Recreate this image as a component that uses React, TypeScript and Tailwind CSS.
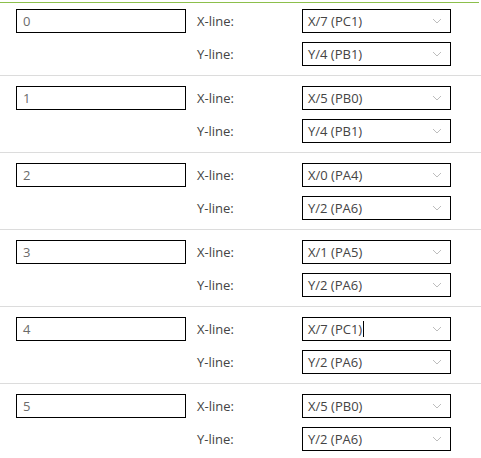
const rows = [
  { id: "0", x: "X/7 (PC1)", y: "Y/4 (PB1)" },
  { id: "1", x: "X/5 (PB0)", y: "Y/4 (PB1)" },
  { id: "2", x: "X/0 (PA4)", y: "Y/2 (PA6)" },
  { id: "3", x: "X/1 (PA5)", y: "Y/2 (PA6)" },
  { id: "4", x: "X/7 (PC1)", y: "Y/2 (PA6)", caret: true },
  { id: "5", x: "X/5 (PB0)", y: "Y/2 (PA6)" },
];

function Chevron() {
  return (
    <svg width="10" height="6" viewBox="0 0 10 6" className="shrink-0">
      <path d="M1 1 L5 5 L9 1" fill="none" stroke="#bdbdbd" strokeWidth="1" />
    </svg>
  );
}

function Select({ value, caret }: { value: string; caret?: boolean }) {
  return (
    <div className="flex h-6 w-[149px] items-center justify-between border border-black bg-white pl-[5px] pr-[8px]">
      <span className="flex items-center text-[#444]">
        {value}
        {caret && <span className="ml-px inline-block h-[16px] w-px bg-black" />}
      </span>
      <Chevron />
    </div>
  );
}

export default function App() {
  return (
    <div
      className="w-[481px] bg-white pt-[2px] text-[13px] leading-none"
      style={{ fontFamily: '"Open Sans", "Liberation Sans", sans-serif' }}
    >
      {rows.map((row, i) => (
        <div
          key={row.id}
          className={
            i === 0
              ? "w-[479px] border-t border-[#8cbf4b] pb-[9px] pt-[6px]"
              : "border-t border-[#dcdcdc] pb-[9px] pt-[10px]"
          }
        >
          <div className="flex flex-col gap-[9px] pl-[16px]">
            <div className="flex items-center">
              <div className="flex h-6 w-[170px] items-center border border-black pl-[6px] text-[#6b6b6b]">
                {row.id}
              </div>
              <span className="ml-[11px] w-[105px] text-[#444]">X-line:</span>
              <Select value={row.x} caret={row.caret} />
            </div>
            <div className="flex items-center">
              <div className="w-[170px]" />
              <span className="ml-[11px] w-[105px] text-[#444]">Y-line:</span>
              <Select value={row.y} />
            </div>
          </div>
        </div>
      ))}
    </div>
  );
}
